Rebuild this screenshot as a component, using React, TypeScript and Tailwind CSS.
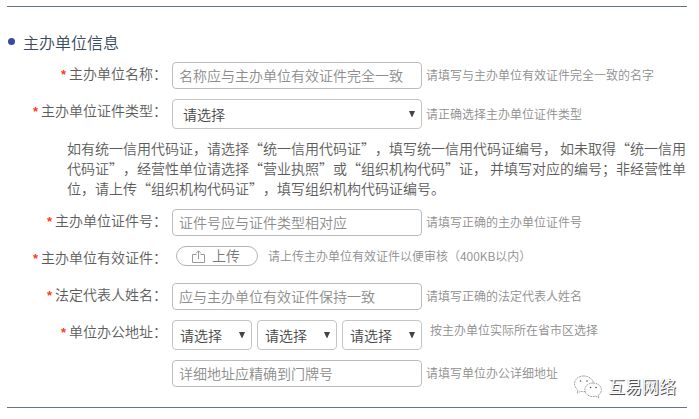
import type { ReactNode } from 'react';
import clsx from 'clsx';

// --- Form pieces ---

const Row = ({ label, children }: { label?: string; children: ReactNode }) => (
  <div className="flex h-[37px] items-start pt-[6px]">
    <div className="flex h-[23px] w-[160px] shrink-0 items-center justify-end text-[14px] text-[#5c5c5c]">
      {label && (
        <>
          <span className="mr-[3px] pt-[3px] font-['Liberation_Sans'] text-[13px] font-bold text-[#ff3a20]">*</span>
          <span>{label}：</span>
        </>
      )}
    </div>
    <div className="ml-[5px] flex items-start">{children}</div>
  </div>
);

const TextInput = ({ placeholder }: { placeholder: string }) => (
  <input
    type="text"
    placeholder={placeholder}
    className="h-[27px] w-[250px] rounded-[4px] border border-[#b9bdc1] bg-white pb-[2px] pl-[6px] text-[14px] text-[#555] outline-none placeholder:text-[#8c8c8c]"
  />
);

const SelectBox = ({ small }: { small?: boolean }) => (
  <button
    type="button"
    className={clsx(
      'flex h-[30px] items-center justify-between rounded-[4px] border border-[#c4c4c4] bg-white text-[14px] text-[#444]',
      small ? 'w-[80px] pr-[6px] pl-[7px]' : 'w-[250px] pr-[6px] pl-[10px]'
    )}
  >
    <span>请选择</span>
    <svg width="6" height="6" viewBox="0 0 6 6" className="mb-[1px]">
      <path d="M0 0h6L3.3 6h-.6z" fill="#444" />
    </svg>
  </button>
);

const Hint = ({ className, children }: { className?: string; children: ReactNode }) => (
  <span className={clsx('text-[12px] leading-[26px] whitespace-nowrap text-[#8e8e8e]', className ?? 'ml-[4px]')}>
    {children}
  </span>
);

const UploadButton = () => (
  <button
    type="button"
    className="ml-[4px] flex h-[20px] w-[82px] items-center rounded-full border border-[#b4b4b4] bg-white pl-[15px] text-[14px] leading-[16px] text-[#777]"
  >
    <svg width="14" height="13" viewBox="0 0 14 13" fill="none" stroke="#999" strokeWidth="1">
      <path d="M4.500 4.500h-4v8h12v-8h-4M6.500 9V1M4 3.300L6.500.800 9 3.300" />
    </svg>
    <span className="mt-[-2px] ml-[6px]">上传</span>
  </button>
);

// --- Watermark ---

const Watermark = () => (
  <div className="absolute top-[372px] left-[573px] flex items-center">
    <svg width="31" height="28" viewBox="0 0 31 28" fill="#fff" stroke="#777" strokeWidth="0.7" strokeDasharray="1.8 0.8">
      <path d="M10.500 4C5.400 4 1.500 7.400 1.500 11.800c0 2.600 1.300 4.800 3.600 6.300L4 21.200l3.600-1.800c1 .2 2 .3 3.200.3C17 19.700 20.500 16 20.500 11.800 20.500 7.400 16 4 10.500 4z" />
      <path d="M20 11c-4.600 0-8.200 3-8.200 6.800s3.600 6.800 8.200 6.800c1 0 2-.1 2.900-.4l3.100 1.800-.8-2.800c2-1.300 3.200-3.200 3.200-5.400C28.400 14 24.600 11 20 11z" />
      <g fill="#555" stroke="none">
        <circle cx="7.500" cy="9" r="0.800" />
        <circle cx="14" cy="9" r="0.800" />
        <circle cx="17.500" cy="15.500" r="0.800" />
        <circle cx="23" cy="15.500" r="0.800" />
      </g>
    </svg>
    <span className="ml-[4px] text-[17px] leading-[28px] font-normal whitespace-nowrap text-white [text-shadow:1px_1px_0_#505050,0_0_1px_#aaa]">
      互易网络
    </span>
  </div>
);

// --- Main App ---

export default function App() {
  return (
    <div
      lang="zh-CN"
      className="relative h-[419px] w-[699px] overflow-hidden bg-white pt-[6px] pl-[7px] font-['Noto_Sans_CJK_SC',sans-serif] font-[350] [text-spacing-trim:space-all]"
    >
      <div className="h-[402px] w-[680px] border-y border-[#687385]">
        <div className="mt-[23px] flex h-[26px] items-center">
          <span className="mt-[-3px] ml-[1px] h-[7px] w-[7px] rounded-full bg-[#3949a3]" />
          <h2 className="mt-[-3px] ml-[8px] text-[16px] leading-[24px] text-[#3c4c60]">主办单位信息</h2>
        </div>

        <Row label="主办单位名称">
          <TextInput placeholder="名称应与主办单位有效证件完全一致" />
          <Hint>请填写与主办单位有效证件完全一致的名字</Hint>
        </Row>
        <Row label="主办单位证件类型">
          <SelectBox />
          <Hint className="mt-[2px] ml-[4px]">请正确选择主办单位证件类型</Hint>
        </Row>

        <div className="h-[73px] pt-[8px] pl-[60px] text-[14px] leading-[20px] whitespace-nowrap text-[#5c5c5c]">
          <p>如有统一信用代码证，请选择“统一信用代码证”，填写统一信用代码证编号， 如未取得“统一信用</p>
          <p>代码证”，经营性单位请选择“营业执照”或“组织机构代码”证， 并填写对应的编号；非经营性单</p>
          <p>位，请上传“组织机构代码证”，填写组织机构代码证编号。</p>
        </div>

        <Row label="主办单位证件号">
          <TextInput placeholder="证件号应与证件类型相对应" />
          <Hint>请填写正确的主办单位证件号</Hint>
        </Row>
        <Row label="主办单位有效证件">
          <UploadButton />
          <Hint className="mt-[-3px] ml-[10px]">请上传主办单位有效证件以便审核（400KB以内）</Hint>
        </Row>
        <Row label="法定代表人姓名">
          <TextInput placeholder="应与主办单位有效证件保持一致" />
          <Hint>请填写正确的法定代表人姓名</Hint>
        </Row>
        <Row label="单位办公地址">
          <div className="flex gap-[5px]">
            <SelectBox small />
            <SelectBox small />
            <SelectBox small />
          </div>
          <Hint className="mt-[-3px] ml-[8px]">按主办单位实际所在省市区选择</Hint>
        </Row>
        <div className="pt-[3px]">
          <Row>
            <TextInput placeholder="详细地址应精确到门牌号" />
            <Hint>请填写单位办公详细地址</Hint>
          </Row>
        </div>
      </div>

      <Watermark />
    </div>
  );
}
